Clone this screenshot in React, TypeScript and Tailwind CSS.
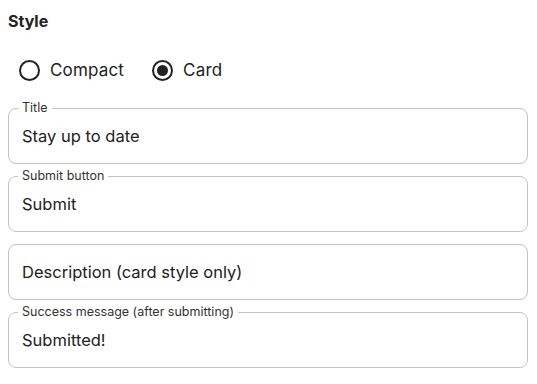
import { useState } from 'react'

type Field = { label?: string; value: string; placeholder?: boolean }

const fields: Field[] = [
  { label: 'Title', value: 'Stay up to date' },
  { label: 'Submit button', value: 'Submit' },
  { value: 'Description (card style only)', placeholder: true },
  { label: 'Success message (after submitting)', value: 'Submitted!' },
]

function Radio({ checked, label, onClick }: { checked: boolean; label: string; onClick: () => void }) {
  return (
    <button type="button" onClick={onClick} className="flex items-center gap-[10px]">
      <span className="flex h-[21px] w-[21px] items-center justify-center rounded-full border-2 border-[#222]">
        {checked ? <span className="h-[11px] w-[11px] rounded-full bg-[#222]" /> : null}
      </span>
      <span className="text-[17px] leading-6 tracking-[0.01em] text-[#222]">{label}</span>
    </button>
  )
}

export default function App() {
  const [style, setStyle] = useState<'compact' | 'card'>('card')

  return (
    <main className="min-h-screen bg-white px-2 pt-[11px] font-['Inter',sans-serif] text-[#222]">
      <h2 className="text-[16px] font-bold leading-5">Style</h2>
      <div className="mt-[27px] flex items-center gap-[28px] pl-[11px]">
        <Radio checked={style === 'compact'} label="Compact" onClick={() => setStyle('compact')} />
        <Radio checked={style === 'card'} label="Card" onClick={() => setStyle('card')} />
      </div>
      <div className="mt-[26px] flex w-[520px] flex-col gap-3">
        {fields.map((f) => (
          <div
            key={f.value}
            className="relative flex h-14 items-center rounded-lg border border-[#c4c4c4] px-[13px]"
          >
            {f.label ? (
              <span className="absolute -top-[9px] left-[9px] bg-white px-1 text-[12.5px] leading-4 text-[#333]">
                {f.label}
              </span>
            ) : null}
            <span className="text-[16.5px] text-[#222]">{f.value}</span>
          </div>
        ))}
      </div>
    </main>
  )
}
